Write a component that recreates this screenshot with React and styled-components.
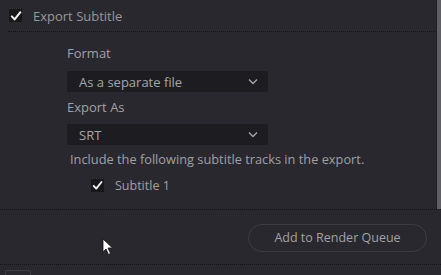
import React from "react";
import styled, { createGlobalStyle } from "styled-components";

const Global = createGlobalStyle`
  html, body { margin: 0; padding: 0; background: #28282e; }
  body { font-family: "Open Sans", "Noto Sans", sans-serif; -webkit-font-smoothing: antialiased; }
`;

const Page = styled.div`
  position: relative;
  width: 441px;
  height: 275px;
  overflow: hidden;
  background: #28282e;
  display: flex;
  flex-direction: column;
`;

const ScrollArea = styled.div`
  display: flex;
  flex: none;
  height: 209px;
`;

const Content = styled.div`
  flex: 1;
  padding-left: 8px;
  border-right: 1px dotted #1a1a1d;
`;

const Scrollbar = styled.div`
  width: 4px;
  background: #5e5e64;
`;

const Header = styled.div`
  display: flex;
  align-items: center;
  gap: 10px;
  height: 31px;
  border-bottom: 1px dotted #141416;
`;

const Box = styled.span`
  width: ${p => p.$size}px;
  height: ${p => p.$size}px;
  box-sizing: border-box;
  background: #18181b;
  border: 1px dotted #3a3a3f;
  border-radius: 2px;
  display: flex;
  align-items: center;
  justify-content: center;
  flex: none;
`;

const HeaderText = styled.span`
  font-size: 13px;
  color: #98989d;
`;

const Body = styled.div`
  padding-left: 59px;
  padding-top: 11px;
  display: flex;
  flex-direction: column;
`;

const Label = styled.div`
  font-size: 13px;
  color: #a2a2a6;
  height: 20px;
  line-height: 20px;
  margin-bottom: ${p => p.$mb || 0}px;
`;

const Select = styled.div`
  width: 201px;
  height: 21px;
  box-sizing: border-box;
  background: #1d1d21;
  border-radius: 2px;
  display: flex;
  align-items: center;
  justify-content: space-between;
  padding: 0 10px 0 12px;
  font-size: 13px;
  color: #a6a6aa;
  margin-bottom: ${p => p.$mb || 0}px;
`;

const Note = styled.div`
  font-size: 12.8px;
  color: #a0a0a4;
  margin-left: 3px;
  height: 18px;
  line-height: 18px;
  margin-top: 5px;
  white-space: nowrap;
`;

const TrackRow = styled.div`
  display: flex;
  align-items: center;
  gap: 10px;
  margin-left: 23px;
  margin-top: 9px;
`;

const TrackText = styled.span`
  font-size: 12.5px;
  color: #a0a0a4;
`;

const Footer = styled.div`
  flex: none;
  height: 54px;
  border-top: 1px dotted #141416;
  border-bottom: 1px dotted #141416;
  display: flex;
  align-items: center;
  justify-content: flex-end;
  padding-right: 14px;
`;

const Button = styled.button`
  width: 179px;
  height: 28px;
  border: 1px solid #3c3c42;
  border-radius: 14px;
  background: transparent;
  color: #a2a2a6;
  font-family: inherit;
  font-size: 12.5px;
  margin-top: 1px;
`;

const Bottom = styled.div`
  flex: 1;
  padding: 5px 0 0 5px;
`;

const SmallBox = styled.div`
  width: 24px;
  height: 12px;
  border: 1px solid #3c3c42;
  border-bottom: none;
  border-radius: 2px 2px 0 0;
`;

const Cursor = styled.svg`
  position: absolute;
  left: 102px;
  top: 238px;
`;

const Check = ({ size = 12 }) => (
  <svg width={size} height={size} viewBox="0 0 12 12">
    <path d="M1.8 6.4 L4.6 9.4 L10.4 2.2" fill="none" stroke="#f2f2f2" strokeWidth="2" strokeLinecap="round" strokeLinejoin="round" />
  </svg>
);

const Chevron = () => (
  <svg width="10" height="7" viewBox="0 0 10 7">
    <path d="M1 1.5 L5 5.5 L9 1.5" fill="none" stroke="#a6a6aa" strokeWidth="1.4" />
  </svg>
);

export default function App() {
  return (
    <>
      <Global />
      <Page>
        <ScrollArea>
          <Content>
            <Header>
              <Box $size={15}><Check size={12} /></Box>
              <HeaderText>Export Subtitle</HeaderText>
            </Header>
            <Body>
              <Label $mb={8}>Format</Label>
              <Select $mb={5}>
                <span>As a separate file</span>
                <Chevron />
              </Select>
              <Label $mb={7}>Export As</Label>
              <Select>
                <span>SRT</span>
                <Chevron />
              </Select>
              <Note>Include the following subtitle tracks in the export.</Note>
              <TrackRow>
                <Box $size={15}><Check size={11} /></Box>
                <TrackText>Subtitle 1</TrackText>
              </TrackRow>
            </Body>
          </Content>
          <Scrollbar />
        </ScrollArea>
        <Footer>
          <Button>Add to Render Queue</Button>
        </Footer>
        <Bottom>
          <SmallBox />
        </Bottom>
        <Cursor width="12" height="18" viewBox="0 0 12 18">
          <path d="M1 1 L1 14 L4 11 L6.5 16.5 L8.5 15.5 L6 10 L10.5 10 Z" fill="#ffffff" stroke="#111" strokeWidth="0.8" />
        </Cursor>
      </Page>
    </>
  );
}
